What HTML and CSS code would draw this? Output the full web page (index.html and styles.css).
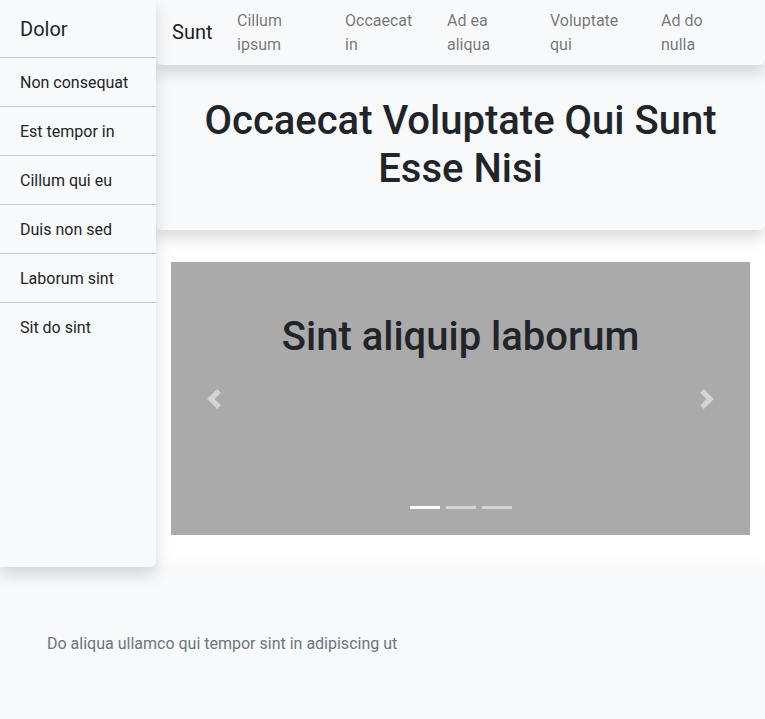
FILE: index.html
```html
<!DOCTYPE html>
<html lang="en">
<head>
<meta charset="utf-8">
<title>Dolor</title>
<link rel="stylesheet" href="styles.css">
</head>
<body>
<div class="page">
  <div class="top">
    <aside class="sidebar">
      <div class="sidebar-head">Dolor</div>
      <ul class="side-list">
        <li class="side-item">Non consequat</li>
        <li class="side-item">Est tempor in</li>
        <li class="side-item">Cillum qui eu</li>
        <li class="side-item">Duis non sed</li>
        <li class="side-item">Laborum sint</li>
        <li class="side-item last">Sit do sint</li>
      </ul>
    </aside>
    <div class="main">
      <nav class="navbar">
        <a class="brand">Sunt</a>
        <ul class="nav">
          <li class="nav-link">Cillum ipsum</li>
          <li class="nav-link">Occaecat in</li>
          <li class="nav-link">Ad ea aliqua</li>
          <li class="nav-link">Voluptate qui</li>
          <li class="nav-link">Ad do nulla</li>
        </ul>
      </nav>
      <header class="hero">
        <h1 class="hero-title">Occaecat Voluptate Qui Sunt Esse Nisi</h1>
      </header>
      <section class="content">
        <div class="carousel">
          <h2 class="slide-title">Sint aliquip laborum</h2>
          <a class="control prev"><svg class="ctrl-icon" viewBox="0 0 8 8"><path d="M5.25 0l-4 4 4 4 1.5-1.5L4.25 4l2.5-2.5L5.25 0z"/></svg></a>
          <a class="control next"><svg class="ctrl-icon" viewBox="0 0 8 8"><path d="M2.75 0l-1.5 1.5L3.75 4l-2.5 2.5L2.75 8l4-4-4-4z"/></svg></a>
          <ol class="indicators">
            <li class="ind active"></li>
            <li class="ind"></li>
            <li class="ind"></li>
          </ol>
        </div>
      </section>
    </div>
  </div>
  <footer class="footer">
    <p class="footer-text">Do aliqua ullamco qui tempor sint in adipiscing ut</p>
  </footer>
</div>
</body>
</html>
```

FILE: styles.css
```css
* { box-sizing: border-box; }
html, body { margin: 0; padding: 0; }
body {
  font-family: Roboto, "Liberation Sans", sans-serif;
  font-size: 16px;
  line-height: 1.5;
  color: #212529;
  background: #fff;
}
.page { display: flex; flex-direction: column; }
.top { display: flex; align-items: stretch; }

.sidebar {
  width: 156px;
  flex: none;
  background: #f8f9fa;
  border-radius: 0 0 6px 0;
  box-shadow: 0 .5rem 1rem rgba(0,0,0,.15);
  position: relative;
  z-index: 3;
}
.sidebar-head {
  font-size: 20px;
  line-height: 30px;
  padding: 14px 20px 13px;
  height: 58px;
  border-bottom: 1px solid #c6c7c8;
}
.side-list { list-style: none; margin: 0; padding: 0; }
.side-item {
  padding: 13px 20px 11px;
  border-bottom: 1px solid #c6c7c8;
}
.side-item.last { border-bottom: none; }

.main { flex: 1; min-width: 0; }
.navbar {
  height: 65px;
  display: flex;
  align-items: center;
  padding: 0 0 1px 16px;
  background: #f8f9fa;
  border-radius: 0 0 6px 6px;
  box-shadow: 0 .5rem 1rem rgba(0,0,0,.15);
  position: relative;
  z-index: 2;
}
.brand { width: 65px; font-size: 20px; line-height: 30px; color: rgba(0,0,0,.9); }
.nav {
  list-style: none; margin: 0; padding: 0;
  display: grid;
  grid-template-columns: 108px 102px 103px 111px 1fr;
  flex: 1;
}
.nav-link { max-width: 72px; padding-top: 2px; color: rgba(0,0,0,.55); }

.hero {
  background: #f8f9fa;
  padding: 32px 48px 37px;
  border-radius: 0 0 6px 6px;
  box-shadow: 0 .5rem 1rem rgba(0,0,0,.15);
  position: relative;
  z-index: 1;
}
.hero-title {
  margin: 0;
  text-align: center;
  font-size: 40px;
  font-weight: 500;
  line-height: 1.2;
}

.content { padding: 32px 15px 32px; }
.carousel {
  height: 273px;
  background: #aaa;
  position: relative;
  overflow: hidden;
}
.slide-title {
  margin: 0;
  padding-top: 51px;
  text-align: center;
  font-size: 40px;
  font-weight: 500;
  line-height: 1.2;
}
.control {
  position: absolute;
  top: 0; bottom: 0;
  width: 15%;
  display: flex;
  align-items: center;
  justify-content: center;
  opacity: .5;
}
.control.prev { left: 0; }
.control.next { right: 0; }
.ctrl-icon { width: 20px; height: 20px; fill: #fff; }
.indicators {
  position: absolute;
  left: 0; right: 0; bottom: 0;
  margin: 0 0 16px;
  padding: 0;
  list-style: none;
  display: flex;
  justify-content: center;
}
.ind {
  width: 30px;
  height: 23px;
  margin: 0 3px;
  border-top: 10px solid transparent;
  border-bottom: 10px solid transparent;
  background: #fff;
  background-clip: padding-box;
  opacity: .5;
}
.ind.active { opacity: 1; }

.footer {
  background: #f8f9fa;
  padding: 65px 47px 63px;
  box-shadow: 0 -.25rem .75rem rgba(0,0,0,.03);
}
.footer-text { margin: 0; color: #6c757d; }
```
